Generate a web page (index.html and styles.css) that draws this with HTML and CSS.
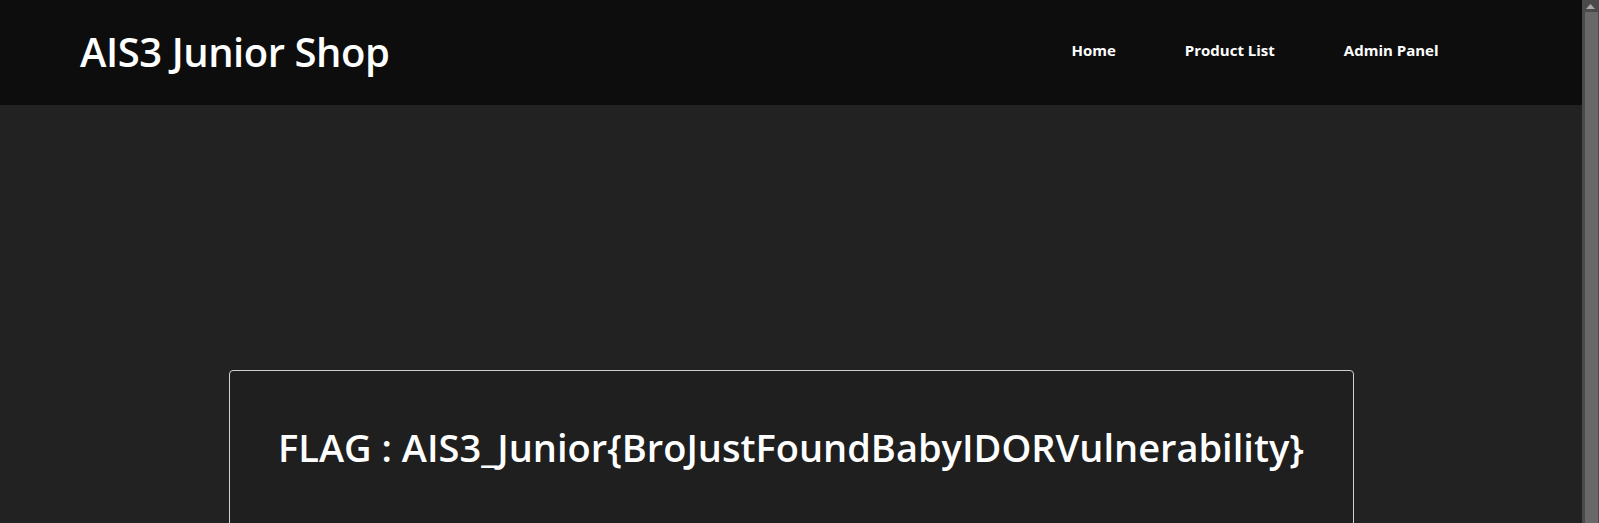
FILE: index.html
```html
<!DOCTYPE html>
<html lang="en">
<head>
<meta charset="utf-8">
<title>AIS3 Junior Shop</title>
<link rel="stylesheet" href="styles.css">
</head>
<body>
<div class="viewport">
  <div class="page">
    <header class="topbar">
      <div class="brand">AIS3 Junior Shop</div>
      <nav class="nav">
        <a class="nav-link" href="#">Home</a>
        <a class="nav-link" href="#">Product List</a>
        <a class="nav-link" href="#">Admin Panel</a>
      </nav>
    </header>
    <main class="content">
      <section class="card">
        <h1 class="flag">FLAG : AIS3_Junior{BroJustFoundBabyIDORVulnerability}</h1>
      </section>
    </main>
  </div>
  <div class="scrollbar">
    <div class="scroll-up"><svg width="9" height="5" viewBox="0 0 9 5"><path d="M4.5 0 L9 5 L0 5 Z" fill="#a8a8a8"/></svg></div>
    <div class="scroll-thumb"></div>
  </div>
</div>
</body>
</html>
```

FILE: styles.css
```css
html, body {
  margin: 0;
  padding: 0;
  height: 100%;
  overflow: hidden;
}
body {
  background: #222222;
  font-family: "Open Sans", "Noto Sans", sans-serif;
  color: #ffffff;
}
.viewport {
  display: flex;
  height: 100%;
}
.page {
  flex: 1;
  min-width: 0;
}
.topbar {
  height: 105px;
  background: #0d0d0d;
  display: flex;
  align-items: center;
  justify-content: space-between;
  padding: 0 109px 0 80px;
}
.brand {
  font-size: 40px;
  font-weight: 600;
  letter-spacing: -0.45px;
  margin-top: -2px;
}
.nav {
  display: flex;
}
.nav-link {
  color: #ffffff;
  text-decoration: none;
  font-size: 15px;
  font-weight: 700;
  padding: 0 34.5px;
  margin-top: -6px;
}
.content {
  padding-top: 265px;
  display: flex;
  justify-content: center;
}
.card {
  width: 1123px;
  height: 300px;
  background: #1f1f1f;
  border: 1px solid #d0d0d0;
  border-radius: 4px;
  display: flex;
  justify-content: center;
}
.flag {
  margin: 50px 0 0;
  font-size: 38px;
  font-weight: 600;
}
.scrollbar {
  width: 17px;
  background: #4a4a4a;
  display: flex;
  flex-direction: column;
  align-items: center;
}
.scroll-up {
  height: 12px;
  width: 100%;
  display: flex;
  align-items: center;
  justify-content: center;
}
.scroll-thumb {
  flex: 1;
  width: 13px;
  margin-left: 2px;
  background: #686868;
}
```
